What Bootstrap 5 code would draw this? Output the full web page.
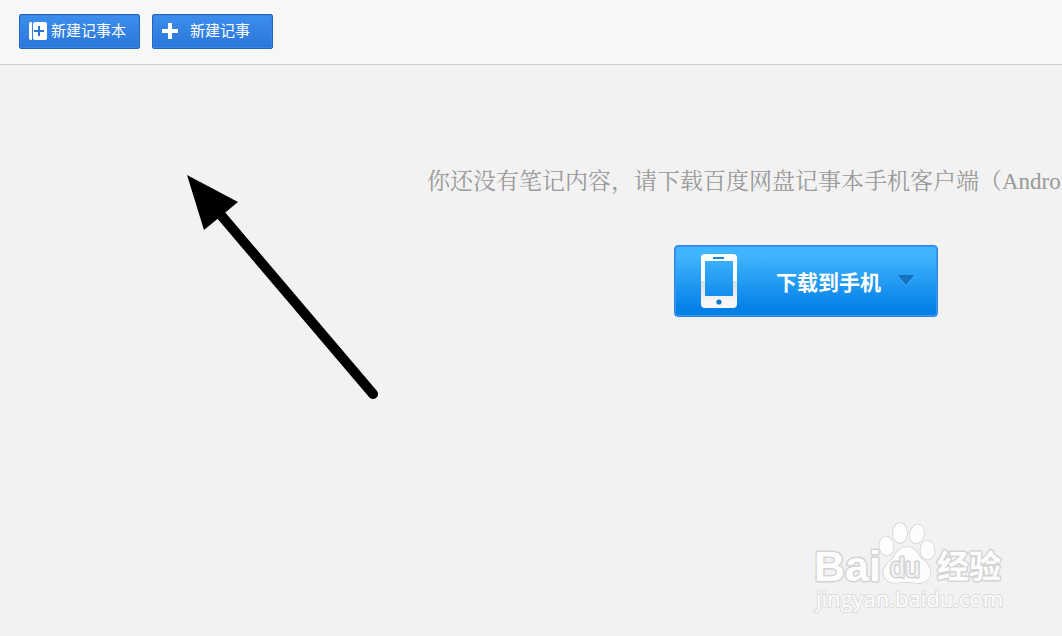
<!DOCTYPE html>
<html lang="zh-CN">
<head>
<meta charset="utf-8">
<meta name="viewport" content="width=device-width, initial-scale=1">
<title>记事本</title>
<link rel="stylesheet" href="https://cdn.jsdelivr.net/npm/bootstrap@5.3.0/dist/css/bootstrap.min.css">
<style>
body { background: #f2f2f2; font-family: "Liberation Sans", "Noto Sans CJK SC", sans-serif; }
.toolbar { height: 65px; background: #f7f7f7; border-bottom: 1px solid #ccc; padding: 14px 19px 0; gap: 12px; }
.btn-note { --bs-btn-color: #fff; --bs-btn-hover-color: #fff; --bs-btn-border-color: #1d66c2;
  height: 35px; min-width: 121px; padding: 0 9px 2px; border-radius: 2px; font-size: 15px; line-height: 31px;
  background: linear-gradient(#3d8eec, #2a76d9); box-shadow: inset 0 0 0 1px #3b85e2; }
.empty-state { width: 758px; margin-left: 427px; padding-top: 100px; }
.hint { font: 23px/34px "Liberation Serif", "Noto Serif CJK SC", "Noto Sans CJK SC", serif; color: #999; margin-bottom: 46px; }
.btn-download { --bs-btn-color: #fff; --bs-btn-hover-color: #fff; --bs-btn-border-color: #3483e4;
  width: 264px; height: 72px; padding: 0 22px 0 26px; border-radius: 4px; font-size: 21px; font-weight: 700;
  background: linear-gradient(#41b4ff 15%, #0480e6 90%); box-shadow: inset 0 0 0 1px #2f9bf1; }
.pointer { left: 180px; top: 105px; }
.watermark { right: 52px; bottom: 16px; }
</style>
</head>
<body class="min-vh-100 d-flex flex-column overflow-hidden">
<header class="toolbar d-flex align-items-start">
  <button type="button" class="btn btn-note d-flex align-items-center">
    <svg width="18" height="18" viewBox="0 0 18 18" aria-hidden="true"><path d="M2 0h1v18H2Q0 18 0 16V2Q0 0 2 0Z" fill="#fff"/><rect x="4" width="14" height="18" rx="2" fill="#fff"/><path d="M10 4v10M5 9h10" stroke="#2b76d4" stroke-width="2"/></svg>
    <span class="ms-1">新建记事本</span>
  </button>
  <button type="button" class="btn btn-note d-flex align-items-center">
    <svg width="16" height="16" viewBox="0 0 16 16" aria-hidden="true"><path d="M8 0v16M0 8h16" stroke="#fff" stroke-width="4"/></svg>
    <span class="ms-2 px-1 me-2">新建记事</span>
  </button>
</header>
<main class="flex-grow-1 position-relative overflow-hidden">
  <section class="empty-state">
    <p class="hint text-nowrap">你还没有笔记内容，请下载百度网盘记事本手机客户端（Androi</p>
    <button type="button" class="btn btn-download d-flex align-items-center mx-auto">
      <svg width="36" height="54" viewBox="0 0 36 54" aria-hidden="true">
        <defs><linearGradient id="shell" x2="0" y2="1"><stop stop-color="#fff"/><stop offset=".49" stop-color="#fff"/><stop offset=".5" stop-color="#dedede"/><stop offset=".9" stop-color="#f7f7f7"/></linearGradient></defs>
        <path fill="url(#shell)" fill-rule="evenodd" d="M4 0H32Q36 0 36 4V50Q36 54 32 54H4Q0 54 0 50V4Q0 0 4 0ZM4 7V42H32V7Z"/>
        <path d="M12 4h11" stroke="#1688d8" stroke-width="2"/><circle cx="18" cy="48" r="2.6" fill="#0a78cd"/>
      </svg>
      <span class="ms-auto pt-1">下载到手机</span>
      <svg class="ms-3" width="18" height="12" viewBox="0 0 18 12" aria-hidden="true"><path d="M0 0H18L9 11Z" fill="#1275c4"/><path d="M0 0L9 11L18 0" fill="none" stroke="#4aacf5"/></svg>
    </button>
  </section>
  <svg class="pointer position-absolute" width="204" height="236" viewBox="180 170 204 236" aria-hidden="true">
    <path d="M220 214L373 394" stroke="#000" stroke-width="10" stroke-linecap="round"/><path d="M187 175L238 202L204 230Z"/>
  </svg>
  <svg class="watermark position-absolute" width="200" height="102" viewBox="810 518 200 102" role="img" aria-label="Baidu 经验">
    <g fill="#fdfdfd" stroke="#d4d4d4" stroke-width="1.6" stroke-linejoin="round" paint-order="stroke">
      <ellipse cx="886.500" cy="546" rx="7" ry="9.500" transform="rotate(-8 886.500 546)"/>
      <ellipse cx="900" cy="533" rx="7" ry="10"/>
      <ellipse cx="917" cy="534" rx="7" ry="9.500" transform="rotate(12 917 534)"/>
      <ellipse cx="927.500" cy="550" rx="7" ry="9.500"/>
      <path d="M907 547C897 547 896 556 890 561C883 567 882 573 885 578C889 584 897 583 902 582H912C919 584 927 583 930 576C932 568 928 564 922 559C917 554 916 547 907 547Z"/>
      <g stroke-width="3">
        <text x="814" y="581" font-size="43" font-weight="700" font-family="Liberation Sans, sans-serif">Bai</text>
        <text x="937" y="578" font-size="32" font-weight="700" font-family="Noto Sans CJK SC, sans-serif">经验</text>
      </g>
      <text x="816" y="607" font-size="22" font-family="Open Sans, Noto Sans, sans-serif" stroke="#dcdcdc" stroke-width="2">jingyan.baidu.com</text>
      <text x="890" y="577" font-size="27" font-family="Liberation Sans, sans-serif" fill="#f4f4f4" stroke="#cfcfcf" stroke-width="3">du</text>
    </g>
  </svg>
</main>
<script src="https://cdn.jsdelivr.net/npm/bootstrap@5.3.0/dist/js/bootstrap.bundle.min.js"></script>
</body>
</html>
